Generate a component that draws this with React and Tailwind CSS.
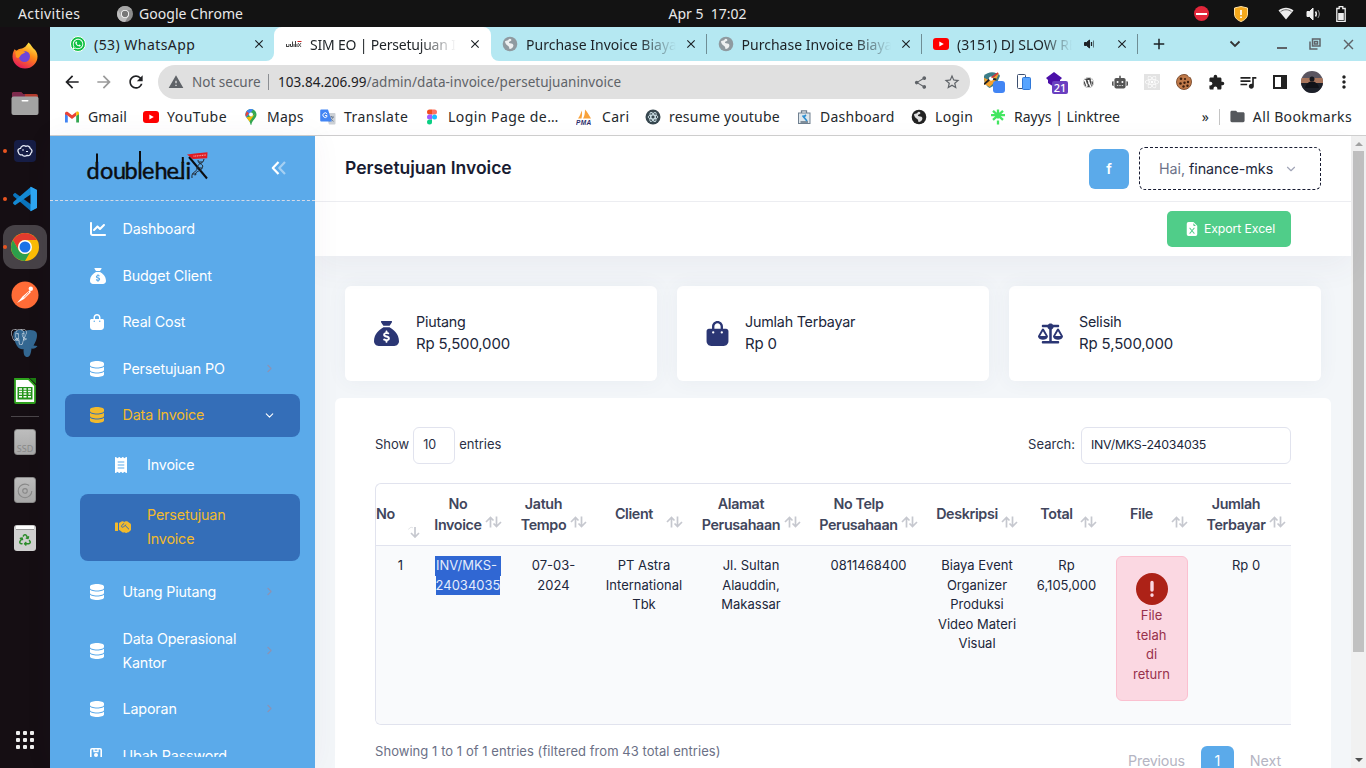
import React from "react";
import {
  FaChartLine, FaSackDollar, FaBagShopping, FaDatabase, FaReceipt, FaScaleBalanced,
  FaWordpress, FaRobot, FaReact, FaWhatsapp, FaRecycle,
} from "react-icons/fa6";
import { BsFileEarmarkExcelFill } from "react-icons/bs";
import {
  MdExtension, MdQueueMusic, MdShare, MdStarBorder, MdWarning, MdArrowBack, MdArrowForward,
  MdRefresh, MdClose, MdAdd, MdVolumeUp, MdMoreVert, MdFolder,
} from "react-icons/md";
import { SiPostgresql } from "react-icons/si";
import { ChevronDown, ChevronRight } from "lucide-react";

/* ---------- small drawings ---------- */

const Globe = ({ className }) => (
  <svg viewBox="0 0 16 16" className={className}>
    <circle cx="8" cy="8" r="7.3" fill="currentColor" />
    <path d="M3 5.2c1.600-1 3-.2 3.600-1.600.4-1 2-1 2.600-.2.8 1-.6 1.800-1.600 2.200-1 .5-.8 1.500.4 1.700 1.800.2 3.600.6 3.400 2.400-.2 1.900-2 3.300-3.600 3.300-.8 0-.4-1.600-1-2.400C5.900 9.500 3.200 8.600 3 5.200z" fill="#fff" fillOpacity=".85" />
  </svg>
);

const YouTube = ({ className }) => (
  <svg viewBox="0 0 16 12" className={className}>
    <rect width="16" height="12" rx="3" fill="#f00" />
    <path d="M6.300 3.400v5.200L10.800 6z" fill="#fff" />
  </svg>
);

const WhatsApp = () => (
  <span className="flex h-4 w-4 items-center justify-center rounded-full border border-white bg-[#0fc143]">
    <FaWhatsapp className="h-3 w-3 text-white" />
  </span>
);

const Gmail = () => (
  <svg viewBox="0 0 16 12" className="h-3 w-4">
    <path d="M1 2v9.500h2.800V5z" fill="#4285f4" />
    <path d="M15 2v9.500h-2.800V5z" fill="#34a853" />
    <path d="M1 2.500C1 .7 2.700.2 3.800 1L8 4.200 12.200 1v3.800L8 8 3.800 4.800 1 3.200z" fill="#ea4335" />
    <path d="M12.200 1c1.100-.8 2.800-.3 2.800 1.300v1L12.200 5z" fill="#fbbc04" />
  </svg>
);

const MapPin = () => (
  <svg viewBox="0 0 12 16" className="h-4 w-4">
    <path d="M6 0C9 0 11.500 2.400 11.500 5.500c0 4-4.500 5.500-5 10.000-.1.600-.9.600-1 0C5 11 .5 9.500.5 5.500.5 2.400 3 0 6 0z" fill="#34a853" />
    <path d="M6 0C3 0 .5 2.400.5 5.500c0 1.200.4 2.200 1 3L8.300 .5C7.600.2 6.800 0 6 0z" fill="#4285f4" />
    <path d="M1.700 2.200.5 5.500c0 .8.200 1.500.5 2.200L4 4.200z" fill="#ea4335" />
    <path d="M1.500 8.500c.8 1.200 2 2.300 3 4L10 5 7.500 7z" fill="#fbbc04" />
    <circle cx="6" cy="5.500" r="2" fill="#fff" />
  </svg>
);

const Translate = () => (
  <svg viewBox="0 0 16 16" className="h-4 w-4">
    <path d="M5 4h9.500a1 1 0 0 1 1 1v9.500a1 1 0 0 1-1 1H9z" fill="#ccd0d5" />
    <path d="M9 8h5M11.500 7v1M13 8c-.6 2-2 3.400-3.500 4.200M10 9c.8 1.500 2 2.600 3.500 3.300" stroke="#6b7c8f" strokeWidth=".9" fill="none" />
    <path d="M1.200.5H8l3.800 12H1.200a1 1 0 0 1-1-1v-10a1 1 0 0 1 1-1z" fill="#4285f4" />
    <path d="M7.200 5A2.300 2.300 0 1 0 7 7.600V6.600H5" stroke="#fff" strokeWidth="1" fill="none" />
  </svg>
);

const Figma = () => (
  <svg viewBox="0 0 12 16" className="h-4 w-4">
    <path d="M3.500.5H6v5H3.500a2.500 2.500 0 0 1 0-5z" fill="#f24e1e" />
    <path d="M6 .5h2.500a2.500 2.500 0 0 1 0 5H6z" fill="#ff7262" />
    <path d="M3.500 5.500H6v5H3.500a2.500 2.500 0 0 1 0-5z" fill="#a259ff" />
    <circle cx="8.500" cy="8" r="2.500" fill="#1abcfe" />
    <path d="M3.500 10.500H6V13a2.500 2.500 0 1 1-2.500-2.500z" fill="#0acf83" />
  </svg>
);

const Pma = () => (
  <svg viewBox="0 0 16 16" className="-ml-1 h-4 w-4">
    <path d="M2 9.500C4 7 5 4 5.500 1.500 6.500 4 6 7 5.500 9.500zM7 9.500c1.500-2 2-5.500 2-9C11.500 3 13 6 15 9.500z" fill="#f8a23b" />
    <text x="0" y="15.500" fontSize="6.500" fontWeight="700" fontStyle="italic" fontFamily="Liberation Sans, sans-serif" textLength="15.500" fill="#2b2d6b">PMA</text>
  </svg>
);

const Resume = () => (
  <svg viewBox="0 0 16 16" className="h-4 w-4">
    <circle cx="8" cy="8" r="7.500" fill="#37474f" />
    <g fill="none" stroke="#cfe3ea" strokeWidth=".9">
      <ellipse cx="8" cy="8" rx="5" ry="2" />
      <ellipse cx="8" cy="8" rx="5" ry="2" transform="rotate(60 8 8)" />
      <ellipse cx="8" cy="8" rx="5" ry="2" transform="rotate(120 8 8)" />
    </g>
  </svg>
);

const DashIcon = () => (
  <svg viewBox="0 0 16 16" className="h-4 w-4" fill="none" stroke="#708090">
    <path d="M5.500 4V1.800h5V4" strokeWidth="1.300" />
    <rect x="2.500" y="4" width="11.500" height="10.500" fill="#dfe7ec" />
    <path d="M4.500 13h7.500" stroke="#607080" strokeWidth="1.500" />
    <path d="M6.500 6.500 11 12M10 6 7 8.500" stroke="#2f8fd0" strokeWidth="1.700" />
  </svg>
);

const Linktree = () => (
  <svg viewBox="0 0 16 16" className="h-4 w-4" stroke="#43e660" strokeWidth="2.300" fill="none">
    <path d="M8 .5v9M1 6.200h14M3 1.800l10 9M13 1.800 3 10.800M8 11.500v4" />
  </svg>
);

const Cookie = () => (
  <svg viewBox="0 0 16 16" className="h-4 w-4">
    <path d="M8 .5c1.500 0 2.500.3 3.500.9.300 1.500 1.500 2 2.800 2.200.8 1.300 1.200 2.800 1.200 4.400A7.500 7.500 0 1 1 8 .5z" fill="#c07a4a" stroke="#6b3a1c" strokeWidth=".8" />
    <g fill="#3d1f0e"><circle cx="5" cy="4.800" r="1.300" /><circle cx="9" cy="5" r="1.100" /><circle cx="4.500" cy="9.500" r="1.300" /><circle cx="8.500" cy="8.700" r="1.200" /><circle cx="12" cy="8" r="1.200" /><circle cx="7.500" cy="12.500" r="1.200" /><circle cx="11.500" cy="11.800" r="1.200" /></g>
  </svg>
);

const Chrome = ({ className, grey }) => (
  <svg viewBox="0 0 28 28" className={className}>
    <circle cx="14" cy="14" r="14" fill={grey ? "#8c8c8c" : "#fbbc05"} />
    <path d="M1.880 7A14 14 0 0 1 26.120 7H14a7 7 0 0 0-6.060 10.500z" fill={grey ? "#a5a5a5" : "#e33b2e"} />
    <path d="M1.880 7A14 14 0 0 0 14 28l6.060-10.500A7 7 0 0 1 7.940 17.500z" fill={grey ? "#bcbcbc" : "#2c9f4b"} />
    <circle cx="14" cy="14" r="7" fill="#fff" />
    <circle cx="14" cy="14" r="5.500" fill={grey ? "#777" : "#1a73e8"} />
  </svg>
);

const Brand = () => (
  <svg viewBox="0 0 124 34" className="h-[34px] w-[124px]">
    <text x="0.500 14 27 38.500 51.200 56 68.500 80.500 94 99.500" y="28.500" fontSize="23.500" fontFamily="Lato, sans-serif" fill="#0b0d10" stroke="#0b0d10" strokeWidth=".45">doubleheli</text>
    <path d="M54 1v12M11 3.500v9M96.800 7v6" stroke="#0b0d10" strokeWidth="2" />
    <path d="M89 28.200h9" stroke="#0b0d10" strokeWidth="1.800" />
    <path d="m103 7 18 21.500" stroke="#0b0d10" strokeWidth="2" />
    <path d="M118 9c-1 6-6 3-6.500 8.500S105 21 106 28M112 10c0 5 6 3 4.500 7.500s-7 2.500-7.500 8M112.500 12h4M110 18h6M106.500 24h4" stroke="#20262d" strokeWidth="1" fill="none" />
    <path d="m101 4.500 8-1 12.500-1.200-.3 6-14.500.7z" fill="#e01b22" />
    <path d="M107.500 6.200 120 5" stroke="#fff" strokeOpacity=".6" strokeWidth="1.300" strokeDasharray="1 .7" />
  </svg>
);

const HandDeal = ({ className }) => (
  <svg viewBox="0 0 16 12" className={className} fill="currentColor">
    <rect x="0" y="1.500" width="3" height="8.500" rx=".5" />
    <path d="M4 2 6.500.6C7.500.1 8.500.3 9.200.9L10 .6c2-.9 3 0 3.800 1L15.400 2.500c.5.400.6 1 .6 1.500v4.500c0 .8-.6 1.200-1.200 1.400-.4 1.100-1.300 1.400-2 1.300-.8 1-2.500 1-3.200.1-1 .6-2 .3-2.600-.4L4.800 9.200 4 9z" />
    <path d="M9.200 2.300 6.600 4.600c-.4.500-.2 1.200.3 1.500.7.300 1.300 0 1.700-.4l1.600-1.200 3.800 3.800M10.200 4.500l1-.9" stroke="#346eb8" strokeWidth="1" fill="none" />
  </svg>
);

const Badge = ({ className }) => (
  <svg viewBox="0 0 12 16" className={className}>
    <rect x=".8" y=".8" width="10.400" height="14.400" rx="1.200" fill="none" stroke="currentColor" strokeWidth="1.600" />
    <path d="M4 1v2.500h4V1" fill="none" stroke="currentColor" strokeWidth="1.300" />
    <circle cx="6" cy="7" r="2" fill="currentColor" />
  </svg>
);

const Chevrons = () => (
  <svg viewBox="0 0 16 14" className="h-[14px] w-4" fill="none" strokeWidth="2.200" strokeLinejoin="round">
    <path d="M14 1 8.300 7l5.700 6" stroke="#fff" strokeOpacity=".45" />
    <path d="M7.500 1 1.800 7l5.700 6" stroke="#fff" />
  </svg>
);

const Sort = () => (
  <svg viewBox="0 0 17 12" className="h-3 w-[17px]" fill="none" stroke="#c6c8cf" strokeWidth="1.700">
    <path d="M5.500 11.500V1.500M1 6l4.500-4.500L8.500 4.500" />
    <path d="M11.500.5v10M8.500 7.500l3 3L16 6" />
  </svg>
);

const SortDown = () => (
  <svg viewBox="0 0 12 12" className="h-3 w-3" fill="none" stroke="#c6c8cf" strokeWidth="1.700">
    <path d="M7 1v10M3 7l4 4 4-4" />
    <path d="M.5 3.500C2 1 4 1 5 2" strokeWidth="1" strokeOpacity=".5" />
  </svg>
);

/* ---------- desktop ---------- */

const TopBar = () => (
  <div className="grid h-[27px] shrink-0 grid-cols-[1fr_auto_1fr] items-center bg-[#131313] text-[14px] text-[#e9e9e9]">
    <div className="flex items-center pl-[18px]">
      <span className="w-[99px] tracking-[0.4px]">Activities</span>
      <Chrome grey className="h-4 w-4" />
      <span className="ml-[6px] tracking-[0.05px]">Google Chrome</span>
    </div>
    <span className="-ml-[2px] whitespace-pre pl-[51px] tracking-[-0.02px]">Apr 5  17:02</span>
    <div className="flex items-center justify-end pr-[20px]">
      <span className="flex h-[15px] w-[15px] items-center justify-center rounded-full bg-[#e2263a]">
        <span className="h-[2px] w-[11px] bg-white" />
      </span>
      <svg viewBox="0 0 14 16" className="ml-[25px] h-4 w-[14px]">
        <path d="M7 .5 13.500 2v6c0 4-3.500 6.500-6.500 7.500C4 14.500.5 12 .5 8V2z" fill="#f5a91c" stroke="#ffe0a0" />
        <path d="M7 4v5M7 10.500v1.600" stroke="#fff" strokeWidth="1.700" />
      </svg>
      <svg viewBox="0 0 16 13" className="ml-[30px] h-[13px] w-4"><path d="M8 12.500.5 3.500C5-.3 11-.3 15.500 3.500z" fill="#eee" /><path d="M2.500 4.700c3.500-2.600 7.500-2.600 11 0" stroke="#333" strokeWidth=".7" fill="none" /></svg>
      <svg viewBox="0 0 16 14" className="ml-[12px] h-[14px] w-4" fill="none" stroke="#eee"><path d="M1 4.500h2.500L7 1v12L3.500 9.500H1z" fill="#eee" /><path d="M9.500 4.500c1 1.500 1 3.500 0 5" strokeWidth="1.500" /><path d="M11.800 3c2 2.500 2 5.500 0 8" stroke="#999" /></svg>
      <svg viewBox="0 0 10 16" className="ml-[14px] h-4 w-[10px]"><path d="M3.200.5h3.600v2H9.200v12.800H.8V2.500h2.400z" fill="none" stroke="#eee" strokeWidth="1.300" /><rect x="2.200" y="7" width="5.600" height="7" fill="#eee" /></svg>
    </div>
  </div>
);

const Firefox = () => (
  <svg viewBox="0 0 28 28" className="h-7 w-7">
    <defs>
      <linearGradient id="ff" x1=".8" y1="0" x2=".3" y2="1"><stop offset="0" stopColor="#fff44f" /><stop offset=".45" stopColor="#ff8a16" /><stop offset="1" stopColor="#e5175c" /></linearGradient>
    </defs>
    <path d="M17.500 1.500c3 2.500 3.500 4.500 5 6 2.500 1.500 4 5 4 8A12.500 12 0 0 1 1.500 15.500c0-4 1.500-6.500 2.500-7.500l.5 3C6 8.500 9 7.500 11 7.500c2-.500 4.500-2.500 6.500-6z" fill="url(#ff)" />
    <circle cx="13.500" cy="15.500" r="5.500" fill="#6f45d8" />
    <path d="M4 9l2.500 1C9.500 9 12 9.500 14.500 11c-1.500 2-4 1.500-5 3.500S7 18 5 16z" fill="#ff9a1f" />
  </svg>
);

const Files = () => (
  <svg viewBox="0 0 28 26" className="h-[26px] w-7">
    <path d="M1 4a2 2 0 0 1 2-2h7l2 2h13a2 2 0 0 1 2 2v7H1z" fill="#b23a2c" />
    <path d="M1 4a2 2 0 0 1 2-2h7l2 2h2v6H1z" fill="#7d2a4d" />
    <rect x=".5" y="6.500" width="27" height="18.500" rx="2" fill="#a3a3a3" />
    <rect x="10.500" y="10" width="7" height="1.600" rx=".8" fill="#fff" />
  </svg>
);

const CloudApp = () => (
  <svg viewBox="0 0 22 22" className="h-[22px] w-[22px]">
    <rect width="22" height="22" rx="4" fill="#161d45" />
    <path d="M4.500 12.500c-1.500-2 0-4.200 2-4.200.5-2.500 3.500-3.500 5.300-2 2-1 4.200.3 4.400 2.200 2 .8 2.500 3.500.6 4.800-.2 1.800-2 2.700-3.600 2-1.700 1.500-4.200 1-5-.5-1.800.5-3.400-.6-3.700-2.300z" fill="none" stroke="#e8ecf7" strokeWidth="1.300" />
    <path d="m8.500 9 1 1-1 1M12 11.500h2" stroke="#e8ecf7" fill="none" />
  </svg>
);

const VsCode = () => (
  <svg viewBox="0 0 26 26" className="h-[26px] w-[26px]">
    <path d="m1 8.500 2-1.800L24 22l-5 3.200L1.300 10z" fill="#0a74bd" />
    <path d="M1 17.500 3 19.300 25 4l-6-3.200L1.300 16z" fill="#1489d4" />
    <path d="M18.500.8 25 4v18l-6.500 3.200z" fill="#2ea6f2" />
  </svg>
);

const Postman = () => (
  <svg viewBox="0 0 28 28" className="h-7 w-7">
    <circle cx="14" cy="14" r="13.500" fill="#ff6c37" />
    <circle cx="19.800" cy="7.800" r="2.200" fill="#fff" />
    <path d="m18.500 9.500-7 6-5.500 6.500 7-4 7-7z" fill="#fff" />
    <path d="m18 11-5 5.500" stroke="#ff6c37" strokeWidth=".8" />
  </svg>
);

const Postgres = () => (
  <svg viewBox="0 0 28 28" className="h-7 w-7 overflow-visible">
    <path d="M3 3c3-3 8-2 11-1 4-1.500 9-1.500 11.500 1.500 1.500 4-.5 9-3 13l4 .5c-1 2-4 3-6 2.500-.5 4-1 8-4 8.500-3 0-4-2-4-8-3 1-6-1-8-6C2.500 9.500 1.500 6 3 3z" fill="#336791" />
    <SiPostgresql x="0" y="0" width="28" height="28" color="#e6ecf2" />
  </svg>
);

const Calc = () => (
  <svg viewBox="0 0 24 26" className="h-[26px] w-6">
    <path d="M2 1h13.500L22 7.500V24a1 1 0 0 1-1 1H3a1 1 0 0 1-1-1z" fill="#fff" stroke="#2ea11d" strokeWidth="1.800" />
    <path d="M16.500 0H23v6z" fill="#1d7d12" />
    <rect x="4.500" y="9" width="15" height="12.500" fill="#22941a" />
    <path d="M6 11h3M10.500 11h3M15 11h3M6 13.500h3M10.500 13.500h3M15 13.500h3M6 16h3M10.500 16h3M6 18.800h3M10.500 18.800h3M15 18.800h3M15.500 16h2" stroke="#fff" strokeWidth="1.400" />
  </svg>
);

const Drive = ({ children }) => (
  <span className="flex h-[26px] w-[22px] items-end justify-center overflow-hidden rounded-[3px] border border-[#8a8a8a] bg-linear-to-b from-[#bdbdbd] to-[#a8a8a8]">{children}</span>
);

const dock = [
  { el: <Firefox /> },
  { el: <Files /> },
  { el: <CloudApp />, dot: true },
  { el: <VsCode />, dot: true },
  { el: <Chrome className="h-7 w-7" />, dot: true, active: true },
  { el: <Postman /> },
  { el: <Postgres /> },
  { el: <Calc /> },
];

const Dock = () => (
  <div className="flex w-[50px] shrink-0 flex-col items-center bg-[#150e13] pt-1">
    {dock.map((d, i) => (
      <div key={i} className="flex h-12 w-full items-center">
        <span className={d.dot ? "z-10 ml-[3px] h-1 w-1 rounded-full bg-[#e95420]" : "ml-[3px] h-1 w-1"} />
        <span className={d.active ? "-ml-1 flex h-[44px] w-[44px] items-center justify-center rounded-xl bg-[#474247]" : "-ml-1 flex h-[44px] w-[44px] items-center justify-center"}>{d.el}</span>
      </div>
    ))}
    <div className="mt-[1px] h-px w-7 shrink-0 bg-[#4a4549]" />
    <div className="flex h-[50px] items-center"><Drive><span className="text-[9px] leading-[11px] text-[#888]">SSD</span></Drive></div>
    <div className="flex h-[46px] items-center">
      <Drive><svg viewBox="0 0 22 26" className="h-6 w-5" fill="none" stroke="#888" strokeWidth="1.200"><circle cx="11" cy="14" r="7.500" strokeDasharray="40 7" /><circle cx="11" cy="14" r="2.500" /></svg></Drive>
    </div>
    <div className="flex h-[50px] items-center">
      <span className="flex h-[26px] w-[22px] flex-col items-center rounded-[3px] bg-[#d0d0d0]">
        <span className="mt-[1px] h-[4px] w-[18px] border-b border-[#999] bg-white" />
        <FaRecycle className="mt-[4px] h-3 w-3 text-[#2c8c2a]" />
      </span>
    </div>
    <div className="mb-[19px] mt-auto grid grid-cols-3 gap-[3px]">
      {Array.from({ length: 9 }, (_, i) => <span key={i} className="h-1 w-1 rounded-[1px] bg-[#eee]" />)}
    </div>
  </div>
);

/* ---------- browser ---------- */

const fade = "min-w-0 flex-1 overflow-hidden whitespace-nowrap mask-r-from-75%";

const TabStrip = () => (
  <div className="flex h-[34px] shrink-0 items-stretch bg-white text-[14px] text-[#1d2226]">
    <div className="flex w-[224px] items-center rounded-br-lg bg-[#b5e8f2] pl-5 pr-2">
      <WhatsApp /><span className="ml-2 flex-1 tracking-[0.45px]">(53) WhatsApp</span><MdClose className="h-[14px] w-[14px]" />
    </div>
    <div className="flex w-[217px] bg-[#b5e8f2]">
      <div className="flex min-w-0 flex-1 items-center rounded-t-lg bg-white pl-3 pr-[9px]">
        <svg viewBox="0 0 16 8" className="h-2 w-4 shrink-0"><path d="M.5 7V4M1 6.500h2V4M4.500 4v2.500h2M6.500 1.500v5M8 4v3M9.500 1v6M11 4v3" stroke="#444" strokeWidth="1" fill="none" /><path d="m12 3 3 4M12 7l3-4" stroke="#555" /><path d="M11.500 1.500h4" stroke="#c22" /></svg>
        <span className={`ml-2 mr-3 ${fade} tracking-[-0.2px]`}>SIM EO | Persetujuan Invoice</span><MdClose className="h-[14px] w-[14px] shrink-0" />
      </div>
    </div>
    <div className="flex flex-1 items-center rounded-bl-lg bg-[#b5e8f2]">
      {[0, 1].map((i) => (
        <div key={i} className="flex h-5 w-[215.5px] items-center border-r border-[#6f8e95] pl-[11px] pr-2">
          <Globe className="h-4 w-4 shrink-0 text-[#8f9aa0]" />
          <span className={`ml-2 mr-2 ${fade} tracking-[0.02px]`}>Purchase Invoice Biaya Event</span>
          <MdClose className="h-[14px] w-[14px] shrink-0" />
        </div>
      ))}
      <div className="flex h-5 w-[216px] items-center border-r border-[#6f8e95] pl-[11px] pr-2">
        <YouTube className="h-3 w-4 shrink-0" />
        <span className={`ml-2 mr-3 ${fade} tracking-[-0.05px]`}>(3151) DJ SLOW REMIX</span>
        <svg viewBox="0 0 11 10" className="mr-[20px] h-[10px] w-[11px] shrink-0" fill="none" stroke="currentColor"><path d="M.5 3.500h2L5.500 1v8L2.500 6.500h-2z" fill="currentColor" /><path d="M7.500 3v4" strokeWidth="1.300" /><path d="M9.500 1.500v7" strokeOpacity=".6" /></svg>
        <MdClose className="h-[14px] w-[14px] shrink-0" />
      </div>
      <MdAdd className="ml-3 h-[18px] w-[18px]" />
      <div className="ml-auto flex items-center text-[#5f6368]">
        <svg viewBox="0 0 12 8" className="h-2 w-3 text-[#333]" fill="none" stroke="currentColor" strokeWidth="1.800"><path d="m1.500 1.500 4.500 4.500 4.500-4.500" /></svg>
        <span className="ml-[36px] mt-2 h-[2px] w-[10px] bg-[#5f6368]" />
        <svg viewBox="0 0 12 12" className="ml-[22px] h-3 w-3" fill="none" stroke="currentColor" strokeWidth="1.500"><path d="M3.500 1h7.500v7H3.500zM1 3.500v7.500h7.500M5.500 3.500h3v2.500h-3z" /></svg>
        <MdClose className="ml-[19px] mr-[9px] h-[17px] w-[17px]" />
      </div>
    </div>
  </div>
);

const extensions = [
  <span className="relative ml-1 block h-5 w-5">
    <svg viewBox="0 0 18 18" className="h-[17px] w-[17px]"><path d="M0 4C4-1 13-1 17 4l-4 9-7 4C2 15-1 9 0 4z" fill="#3c7d88" /><path d="m0 6 6 3L16 1l-4 9-6 6-5-3z" fill="#f4a12c" /><path d="m0 13 7-6 6 1" stroke="#222" strokeWidth="2" fill="none" /><circle cx="7.500" cy="7" r="2.300" fill="#fff" /><path d="m8 6 7-5" stroke="#d33" strokeWidth="1.500" /></svg>
    <span className="absolute left-[9px] top-[9px] h-3 w-3 rounded-[3px] bg-[#4285f4]" />
  </span>,
  <svg viewBox="0 0 14 16" className="h-4 w-[14px]"><rect x=".5" y=".5" width="8" height="14" rx="1" fill="#fff" stroke="#3c4f70" /><rect x="5.500" y="3.500" width="8" height="12" rx="1" fill="#57a4ff" stroke="#3078d8" /></svg>,
  <span className="relative block h-5 w-5">
    <svg viewBox="0 0 16 16" className="h-4 w-4"><path d="m8 0 8 6-2 2v4L8 15l-6-4V8L0 6z" fill="#4b0fa8" /></svg>
    <span className="absolute left-[6px] top-[9px] flex h-[13px] w-4 items-center justify-center rounded-[2px] bg-[#6a3fc0] text-[11px] font-medium leading-none text-white">21</span>
  </span>,
  <FaWordpress className="h-[11px] w-[11px] text-[#454545]" />,
  <FaRobot className="h-4 w-4 text-[#555]" />,
  <span className="flex h-4 w-4 items-center justify-center bg-[#e3e3e3]"><FaReact className="h-[14px] w-[14px] text-white" /></span>,
  <Cookie />,
  <MdExtension className="h-[17px] w-[17px] text-[#222]" />,
  <MdQueueMusic className="h-5 w-5 text-[#222]" />,
  <span className="flex h-[14px] w-[14px] justify-end border-2 border-[#222]"><span className="h-full w-1 bg-[#222]" /></span>,
  <svg viewBox="0 0 22 22" className="h-[22px] w-[22px]"><defs><clipPath id="av"><circle cx="11" cy="11" r="11" /></clipPath></defs><g clipPath="url(#av)"><rect width="22" height="22" fill="#5a5560" /><rect y="7" width="22" height="6" fill="#a8755c" /><rect y="12" width="22" height="10" fill="#1c2029" /><circle cx="11" cy="8" r="2.500" fill="#15171d" /><path d="M4 17c1-5 4-6.500 7-6.500S17 12 18 17z" fill="#101218" /></g></svg>,
  <MdMoreVert className="h-5 w-5 text-[#222]" />,
];

const Toolbar = () => (
  <div className="flex h-[42px] shrink-0 items-center bg-white">
    <div className="flex w-[108px] items-center text-[#202124]">
      <MdArrowBack className="ml-[12px] h-5 w-5" />
      <MdArrowForward className="ml-3 h-5 w-5 text-[#9a9a9a]" />
      <MdRefresh className="ml-3 h-5 w-5" />
    </div>
    <div className="flex h-[34px] w-[812px] items-center rounded-full bg-[#e0e0e0] pl-[10px] pr-[9px] text-[13.5px] text-[#5f6368]">
      <MdWarning className="h-4 w-4" />
      <span className="ml-2 w-[72px] whitespace-nowrap">Not secure</span>
      <span className="ml-[4px] h-4 w-px bg-[#8b8e92]" />
      <span className="ml-[9px] flex-1 tracking-[0.03px]"><span className="text-[#202124]">103.84.206.99</span>/admin/data-invoice/persetujuaninvoice</span>
      <MdShare className="h-[15px] w-[15px]" />
      <MdStarBorder className="ml-[15px] h-[18px] w-[18px]" />
    </div>
    <div className="ml-[6px] flex">
      {extensions.map((e, i) => <span key={i} className="flex h-8 w-8 items-center justify-center">{e}</span>)}
    </div>
  </div>
);

const bookmarks = [
  [<Gmail />, "Gmail", "w-[79px] tracking-[0.1px]"],
  [<YouTube className="h-3 w-4" />, "YouTube", "w-[100px] tracking-[0.5px]"],
  [<MapPin />, "Maps", "w-[77px] tracking-[0.2px]"],
  [<Translate />, "Translate", "w-[104px] tracking-[0.45px]"],
  [<Figma />, "Login Page de…", "w-[154px] tracking-[0.45px]"],
  [<Pma />, "Cari", "w-[67px] tracking-[0.3px]"],
  [<Resume />, "resume youtube", "w-[151px] tracking-[0.22px]"],
  [<DashIcon />, "Dashboard", "w-[115px] tracking-[0.25px]"],
  [<Globe className="h-4 w-4 text-[#222]" />, "Login", "w-[79px] tracking-[0.3px]"],
  [<Linktree />, "Rayys | Linktree", "w-[200px]"],
];

const Bookmarks = () => (
  <div className="flex h-[33px] shrink-0 items-center border-b border-[#cfcfcf] bg-white pb-[5px] pl-[14px] text-[14px] text-[#24282c]">
    {bookmarks.map(([icon, label, w]) => (
      <div key={label} className={`flex shrink-0 items-center gap-2 whitespace-nowrap ${w}`}>
        <span className="flex w-4 justify-center">{icon}</span><span className="-mt-px">{label}</span>
      </div>
    ))}
    <span className="-mt-px ml-auto">»</span>
    <span className="ml-[10px] h-4 w-px bg-[#c4c4c4]" />
    <MdFolder className="ml-[9px] h-[17px] w-[17px] text-[#55585c]" />
    <span className="-mt-px ml-[7px] mr-[14px] whitespace-nowrap tracking-[0.38px]">All Bookmarks</span>
  </div>
);

/* ---------- application ---------- */

const MenuItem = ({ icon: Icon, iconClass = "w-[14px] mr-[18.5px]", label, arrow, open, className = "" }) => (
  <div className={`ml-[15px] flex min-h-[43px] w-[235px] shrink-0 items-center rounded-lg px-[25px] ${open ? "bg-[#346eb8] text-[#f2ba2c]" : "text-white"} ${className}`}>
    <Icon className={`h-4 shrink-0 ${iconClass}`} />
    <span className="flex-1 leading-6">{label}</span>
    {arrow && <ChevronRight className="-mr-px h-[13px] w-[13px] shrink-0 text-[#8b93b5]" />}
    {open && <ChevronDown className="-mr-px h-[13px] w-[13px] shrink-0 text-white" />}
  </div>
);

const Sidebar = () => (
  <aside className="z-10 flex w-[265px] shrink-0 flex-col bg-[#5baaea] text-[14.3px] tracking-[-0.15px] shadow-[0_0_28px_rgba(82,63,105,0.05)]">
    <div className="flex h-[65px] shrink-0 items-center justify-between border-b border-dashed border-[#d6dbe8] pl-[36px] pr-[28px]">
      <div className="-mt-[3px]"><Brand /></div>
      <Chevrons />
    </div>
    <div className="flex h-[556px] shrink-0 flex-col overflow-hidden pt-[6.5px]">
      <div className="flex shrink-0 flex-col gap-[3.5px]">
        <MenuItem icon={FaChartLine} iconClass="w-4 mr-[16.5px]" label="Dashboard" />
        <MenuItem icon={FaSackDollar} iconClass="w-4 mr-[16.5px]" label="Budget Client" />
        <MenuItem icon={FaBagShopping} label="Real Cost" />
        <MenuItem icon={FaDatabase} label="Persetujuan PO" arrow />
        <MenuItem icon={FaDatabase} label="Data Invoice" open />
      </div>
      <div className="mb-[9.5px] ml-[30px] mt-[6.5px] flex shrink-0 flex-col gap-[7.5px]">
        <div className="flex h-[43px] items-center pl-[35px] text-white">
          <FaReceipt className="h-4 w-3" /><span className="ml-[20px]">Invoice</span>
        </div>
        <div className="flex h-[67px] w-[220px] items-center rounded-lg bg-[#346eb8] pl-[35px] text-[#f2ba2c]">
          <HandDeal className="h-3 w-4" /><span className="ml-[16px] w-[100px] leading-6">Persetujuan Invoice</span>
        </div>
      </div>
      <div className="flex shrink-0 flex-col gap-[3.5px]">
        <MenuItem icon={FaDatabase} label="Utang Piutang" arrow />
        <MenuItem icon={FaDatabase} label="Data Operasional Kantor" arrow className="h-[68px]" />
        <MenuItem icon={FaDatabase} label="Laporan" arrow className="-mt-px" />
        <MenuItem icon={Badge} iconClass="w-3 mr-[20.5px]" label="Ubah Password" className="mt-px" />
      </div>
    </div>
  </aside>
);

const StatCard = ({ icon: Icon, iconClass, label, value }) => (
  <div className="flex h-[95px] flex-1 items-center rounded-md bg-white pl-[29px] shadow-[0_0_20px_rgba(76,87,125,0.06)]">
    <Icon className={`text-[#2b3674] ${iconClass}`} />
    <div className="-mt-px text-[#20263a]">
      <div className="text-[14.3px] leading-[22px] tracking-[-0.2px]">{label}</div>
      <div className="text-[14.95px] leading-[22px] tracking-[-0.12px]">{value}</div>
    </div>
  </div>
);

const columns = [
  { head: ["No"], body: "1", w: "w-[49px]" },
  { head: ["No", "Invoice"], w: "w-[86px]", selected: ["INV/MKS-", "24034035"] },
  { head: ["Jatuh", "Tempo"], body: "07-03-2024", w: "w-[85px]" },
  { head: ["Client"], body: "PT Astra International Tbk", w: "w-[96px]" },
  { head: ["Alamat", "Perusahaan"], body: "Jl. Sultan Alauddin, Makassar", w: "w-[118px]" },
  { head: ["No Telp", "Perusahaan"], body: "0811468400", w: "w-[117px]" },
  { head: ["Deskripsi"], body: "Biaya Event Organizer Produksi Video Materi Visual", w: "w-[100px]" },
  { head: ["Total"], body: "Rp 6,105,000", w: "w-[79px]" },
  { head: ["File"], w: "w-[91px]" },
  { head: ["Jumlah", "Terbayar"], body: "Rp 0", w: "w-[98px]" },
];

const FileReturned = () => (
  <div className="flex h-[145px] flex-col items-center rounded-md border border-[#fbc0d0] bg-[#fbd8e2] pt-4 text-[#97304b]">
    <svg viewBox="0 0 32 32" className="h-8 w-8"><circle cx="16" cy="16" r="16" fill="#ad2217" /><path d="M16 9.500v7.500M16 22v.2" stroke="#fbd8e2" strokeWidth="3.400" strokeLinecap="round" /></svg>
    <span className="mt-[1px] w-10 text-center">File telah di return</span>
  </div>
);

const Selected = ({ lines }) => (
  <div className="-mx-1 flex flex-col items-center text-[#e4ecfb]">
    <span className="h-5 bg-[#3067d3] pr-1 pl-px">{lines[0]}</span>
    <span className="-mt-[0.5px] bg-[#3067d3]">{lines[1]}</span>
  </div>
);

const InvoiceTable = () => (
  <div className="mt-[19px] h-[242px] overflow-hidden rounded-l-md border border-r-0 border-[#e1e3ee]">
    <div className="flex w-[919px] border-b border-[#e1e3ee] text-[14.3px] font-semibold leading-[21px] text-[#41465c]">
      {columns.map((c, i) => (
        <div key={i} className={`relative flex h-[61px] shrink-0 items-center pb-[2px] ${i ? "justify-center pl-[9px] pr-[29px]" : "justify-start"} text-center ${c.w}`}>
          <span className={i ? "-mx-[12px] flex flex-col whitespace-nowrap tracking-[-0.35px]" : "tracking-[-0.25px]"}>
            {c.head.map((line) => <span key={line}>{line}</span>)}
          </span>
          {i ? <span className="absolute right-[9px] top-[32px]"><Sort /></span> : <span className="absolute right-[5px] top-[42px]"><SortDown /></span>}
        </div>
      ))}
    </div>
    <div className="flex h-full w-[919px] bg-[#f9fafc] text-[13px] leading-[19.5px] text-[#20263a]">
      {columns.map((c, i) => (
        <div key={i} className={`shrink-0 px-[9.5px] pt-[10px] text-center ${c.w}`}>
          {c.selected ? <Selected lines={c.selected} /> : c.body || <FileReturned />}
        </div>
      ))}
    </div>
  </div>
);

const Main = () => (
  <main className="flex min-w-0 flex-1 flex-col bg-[#f3f6f9]">
    <header className="relative shrink-0 bg-white shadow-[0_10px_30px_rgba(82,63,105,0.06)]">
      <div className="flex h-[66px] items-center border-b border-[#ecedf1] px-[30px]">
        <h1 className="flex-1 text-[17.55px] font-semibold tracking-[-0.02px] text-[#181c32]">Persetujuan Invoice</h1>
        <span className="mt-px flex h-10 w-10 items-center justify-center rounded-md bg-[#5baaea] text-[14.3px] font-semibold text-white">f</span>
        <div className="ml-[10px] flex h-[43px] w-[182px] items-center rounded-md border border-dashed border-[#181c32] pl-[19px] text-[14.3px]">
          <span className="tracking-[-0.05px] text-[#6d7289]">Hai, <span className="text-[#20263a]">finance-mks</span></span>
          <ChevronDown className="ml-[11px] h-[14px] w-[14px] text-[#a1a5b7]" />
        </div>
      </div>
      <div className="flex h-[54px] items-center justify-end pr-[60px]">
        <button className="flex h-9 w-[124px] items-center justify-center gap-[5px] rounded-[5px] bg-[#50cd89] pl-[2px] text-[12.35px] tracking-[-0.12px] text-white"><BsFileEarmarkExcelFill className="h-[14px] w-[14px]" />Export Excel</button>
      </div>
    </header>
    <section className="mt-[30px] flex shrink-0 gap-5 px-[30px]">
      <StatCard icon={FaSackDollar} iconClass="mr-[17px] h-[25px] w-[25px]" label="Piutang" value="Rp 5,500,000" />
      <StatCard icon={FaBagShopping} iconClass="mr-[16px] h-[25px] w-[23px]" label="Jumlah Terbayar" value="Rp 0" />
      <StatCard icon={FaScaleBalanced} iconClass="mr-[16px] h-[25px] w-[25px]" label="Selisih" value="Rp 5,500,000" />
    </section>
    <section className="mx-5 mt-[17px] h-[420px] shrink-0 rounded-md bg-white px-10 pt-[29px] text-[13px] text-[#2b3045]">
      <div className="flex h-[37px] items-center">
        <span className="-mt-[2px]">Show</span>
        <span className="mx-[4px] flex h-[37px] w-[42px] items-center rounded-md border border-[#e1e3ee] pb-px pl-[9px] text-[12.5px]">10</span>
        <span className="-mt-[2px] flex-1">entries</span>
        <span className="-mt-[2px]">Search:</span>
        <span className="ml-[6px] flex h-[37px] w-[210px] items-center rounded-md border border-[#e1e3ee] pb-px pl-[9px] text-[12.35px] tracking-[-0.25px] text-[#20263a]">INV/MKS-24034035</span>
      </div>
      <InvoiceTable />
      <div className="flex justify-between">
        <span className="mt-[17px] tracking-[0.05px] text-[#6b7086]">Showing 1 to 1 of 1 entries (filtered from 43 total entries)</span>
        <div className="mt-[21px] flex items-center text-[14.3px] text-[#b5b5c3]">
          <span className="-mt-[2px] tracking-[-0.2px]">Previous</span>
          <span className="mx-[16px] flex h-[31px] w-[33px] items-center justify-center rounded-md bg-[#5baaea] pb-[2px] text-white">1</span>
          <span className="-mt-[2px] mr-[10px] tracking-[-0.1px]">Next</span>
        </div>
      </div>
    </section>
  </main>
);

const Scrollbar = () => (
  <div className="flex w-[15px] shrink-0 flex-col items-center justify-between bg-[#f1f1f1]">
    <div className="flex flex-col items-center">
      <span className="mt-[6px] h-0 w-0 border-x-4 border-b-4 border-x-transparent border-b-[#a3a3a3]" />
      <span className="mt-[5px] h-[501px] w-[11px] bg-[#c1c1c1]" />
    </div>
    <span className="mb-[6px] h-0 w-0 border-x-4 border-t-4 border-x-transparent border-t-[#505050]" />
  </div>
);

export default function App() {
  return (
    <div className="flex h-[768px] w-[1366px] flex-col overflow-hidden font-['Noto_Sans',sans-serif]">
      <TopBar />
      <div className="flex min-h-0 flex-1">
        <Dock />
        <div className="flex min-w-0 flex-1 flex-col">
          <TabStrip />
          <Toolbar />
          <Bookmarks />
          <div className="flex min-h-0 flex-1 font-['Inter',sans-serif]">
            <Sidebar />
            <Main />
            <Scrollbar />
          </div>
        </div>
      </div>
    </div>
  );
}
